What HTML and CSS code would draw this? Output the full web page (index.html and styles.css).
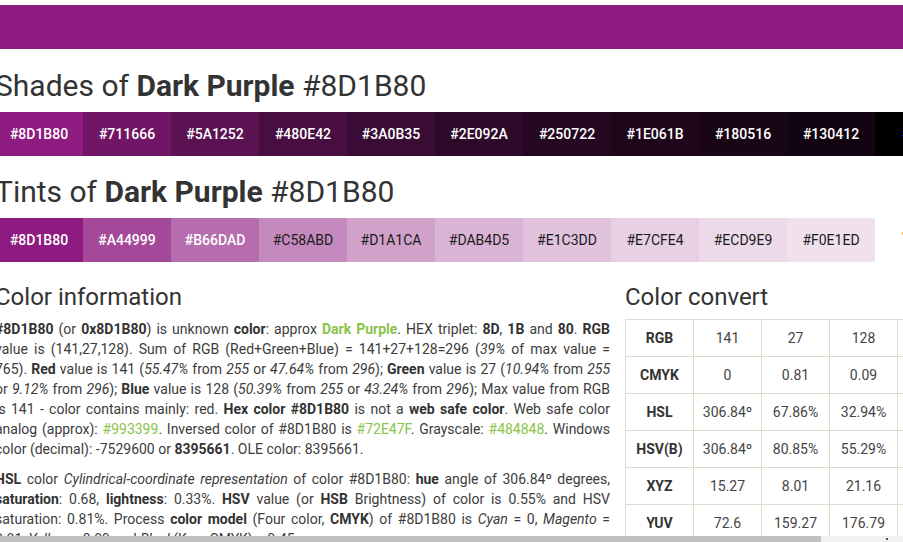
FILE: index.html
```html
<!DOCTYPE html>
<html lang="en">
<head>
<meta charset="utf-8">
<title>Dark Purple #8D1B80</title>
<link rel="stylesheet" href="styles.css">
</head>
<body>
<div class="page">
  <div class="topbar"></div>

  <h1 class="title">Shades of <b>Dark Purple</b> #8D1B80</h1>
  <div class="swatches">
    <div class="sw" style="background:#8D1B80">#8D1B80</div>
    <div class="sw" style="background:#711666">#711666</div>
    <div class="sw" style="background:#5A1252">#5A1252</div>
    <div class="sw" style="background:#480E42">#480E42</div>
    <div class="sw" style="background:#3A0B35">#3A0B35</div>
    <div class="sw" style="background:#2E092A">#2E092A</div>
    <div class="sw" style="background:#250722">#250722</div>
    <div class="sw" style="background:#1E061B">#1E061B</div>
    <div class="sw" style="background:#180516">#180516</div>
    <div class="sw" style="background:#130412">#130412</div>
    <div class="sw sw-edge sw-black">#000000</div>
  </div>

  <h1 class="title">Tints of <b>Dark Purple</b> #8D1B80</h1>
  <div class="swatches">
    <div class="sw" style="background:#8D1B80">#8D1B80</div>
    <div class="sw" style="background:#A44999">#A44999</div>
    <div class="sw" style="background:#B66DAD">#B66DAD</div>
    <div class="sw dark" style="background:#C58ABD">#C58ABD</div>
    <div class="sw dark" style="background:#D1A1CA">#D1A1CA</div>
    <div class="sw dark" style="background:#DAB4D5">#DAB4D5</div>
    <div class="sw dark" style="background:#E1C3DD">#E1C3DD</div>
    <div class="sw dark" style="background:#E7CFE4">#E7CFE4</div>
    <div class="sw dark" style="background:#ECD9E9">#ECD9E9</div>
    <div class="sw dark" style="background:#F0E1ED">#F0E1ED</div>
    <div class="sw sw-edge sw-white">'#FFFFFF</div>
  </div>

  <div class="info">
    <div class="info-main">
      <h2 class="sub">Color information</h2>
      <p class="text"><b>#8D1B80</b> (or <b>0x8D1B80</b>) is unknown <b>color</b>: approx <a class="lnk strong">Dark Purple</a>. HEX triplet: <b>8D</b>, <b>1B</b> and <b>80</b>. <b>RGB</b> value is (141,27,128). Sum of RGB (Red+Green+Blue) = 141+27+128=296 (<i>39%</i> of max value = 765). <b>Red</b> value is 141 (<i>55.47%</i> from <i>255</i> or <i>47.64%</i> from <i>296</i>); <b>Green</b> value is 27 (<i>10.94%</i> from <i>255</i> or <i>9.12%</i> from <i>296</i>); <b>Blue</b> value is 128 (<i>50.39%</i> from <i>255</i> or <i>43.24%</i> from <i>296</i>); Max value from RGB is 141 - color contains mainly: red. <b>Hex color #8D1B80</b> is not a <b>web safe color</b>. Web safe color analog (approx): <a class="lnk">#993399</a>. Inversed color of #8D1B80 is <a class="lnk">#72E47F</a>. Grayscale: <a class="lnk">#484848</a>. Windows color (decimal): -7529600 or <b>8395661</b>. OLE color: 8395661.</p>
      <p class="text"><b>HSL</b> color <i>Cylindrical-coordinate representation</i> of color #8D1B80: <b>hue</b> angle of 306.84º degrees, <b>saturation</b>: 0.68, <b>lightness</b>: 0.33%. <b>HSV</b> value (or <b>HSB</b> Brightness) of color is 0.55% and HSV saturation: 0.81%. Process <b>color model</b> (Four color, <b>CMYK</b>) of #8D1B80 is <i>Cyan</i> = 0, <i>Magento</i> = 0.81, <i>Yellow</i> = 0.09 and <i>Black</i>(K on CMYK) = 0.45.</p>
    </div>
    <div class="info-side">
      <h2 class="sub">Color convert</h2>
      <table class="conv">
        <tr><th>RGB</th><td>141</td><td>27</td><td>128</td><td></td></tr>
        <tr><th>CMYK</th><td>0</td><td>0.81</td><td>0.09</td><td>0.45</td></tr>
        <tr><th>HSL</th><td>306.84º</td><td>67.86%</td><td>32.94%</td><td></td></tr>
        <tr><th>HSV(B)</th><td>306.84º</td><td>80.85%</td><td>55.29%</td><td></td></tr>
        <tr><th>XYZ</th><td>15.27</td><td>8.01</td><td>21.16</td><td></td></tr>
        <tr><th>YUV</th><td>72.6</td><td>159.27</td><td>176.79</td><td></td></tr>
        <tr><th>YIQ</th><td>72.6</td><td>159.27</td><td>176.79</td><td></td></tr>
      </table>
    </div>
  </div>
</div>

<div class="hscroll"><div class="hscroll-thumb"></div><div class="hscroll-arrow"></div></div>
</body>
</html>
```

FILE: styles.css
```css
html, body {
  margin: 0;
  padding: 0;
  overflow: hidden;
  background: #ffffff;
}

body {
  font-family: Roboto, "Liberation Sans", Arial, sans-serif;
  color: #3a3a3a;
  font-size: 14px;
}

.page {
  margin-left: -5px;
  padding-top: 5px;
  width: 1100px;
}

.topbar {
  height: 44px;
  background: #8D1B80;
  width: 1000px;
}

.title {
  font-size: 30px;
  font-weight: 400;
  line-height: 35px;
  margin: 19px 0 9px;
  color: #333333;
  white-space: nowrap;
}

.title:nth-of-type(2) {
  margin-top: 18px;
}

.title b {
  font-weight: 700;
}

.swatches {
  display: flex;
  height: 44px;
}

.sw {
  flex: 0 0 88px;
  display: flex;
  align-items: center;
  justify-content: center;
  color: #ffffff;
  font-size: 14px;
  font-weight: 500;
  white-space: nowrap;
}

.sw.dark {
  color: #1a1a1a;
  font-weight: 400;
}

.sw-edge {
  justify-content: flex-start;
  padding-left: 27px;
  box-sizing: border-box;
}

.sw-black {
  background: #000000;
  color: #2437c8;
}

.sw-white {
  background: #ffffff;
  color: #d08a10;
  font-size: 10px;
  align-items: flex-start;
  padding-top: 13px;
}

.info {
  display: grid;
  grid-template-columns: 615px 340px;
  column-gap: 15px;
  margin-top: 21px;
}

.sub {
  font-size: 24px;
  font-weight: 400;
  line-height: 28px;
  margin: 0 0 8px;
  color: #333333;
}

.text {
  margin: 0 0 10px;
  line-height: 20px;
  text-align: justify;
  color: #3c3c3c;
}

.text b {
  font-weight: 700;
  color: #333333;
}

.lnk {
  color: #8bc34a;
  text-decoration: none;
}

.lnk.strong {
  font-weight: 700;
}

.conv {
  border-collapse: collapse;
  table-layout: fixed;
  width: 338px;
}

.conv th,
.conv td {
  border: 1px solid #e2d9ce;
  height: 36px;
  padding: 0;
  text-align: center;
  font-size: 14px;
  width: 67px;
}

.conv th {
  font-weight: 700;
  color: #333333;
}

.conv td {
  color: #444444;
}

.hscroll {
  position: fixed;
  left: 0;
  right: 0;
  bottom: 0;
  height: 6px;
  background: #f1f1f1;
}

.hscroll-thumb {
  width: 821px;
  height: 6px;
  background: #c1c1c1;
}

.hscroll-arrow {
  position: absolute;
  left: 886px;
  top: 2px;
  width: 2px;
  height: 2px;
  background: #505050;
}
```
